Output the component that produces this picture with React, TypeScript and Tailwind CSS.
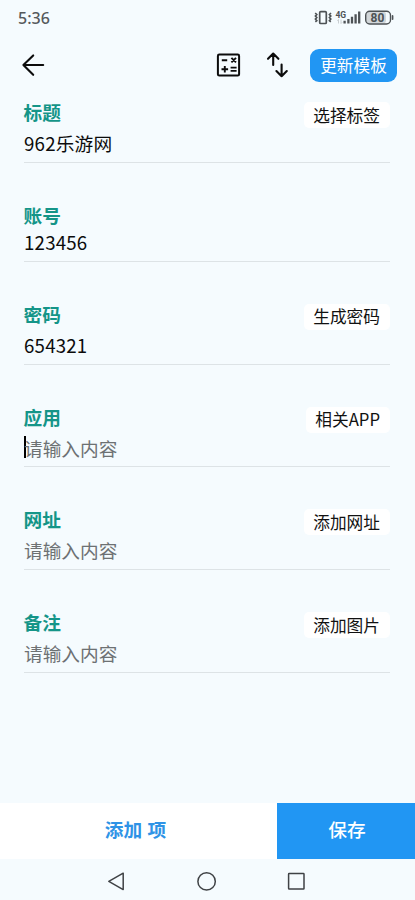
import React from "react";

type Field = {
  label: string;
  value?: string;
  action?: string;
  focused?: boolean;
};

const fields: Field[] = [
  { label: "标题", value: "962乐游网", action: "选择标签" },
  { label: "账号", value: "123456" },
  { label: "密码", value: "654321", action: "生成密码" },
  { label: "应用", action: "相关APP", focused: true },
  { label: "网址", action: "添加网址" },
  { label: "备注", action: "添加图片" },
];

const StatusBar = () => (
  <div className="flex h-[35px] items-center justify-between pl-[18px] pr-[21px] text-[#55595c]">
    <span className="font-['Noto_Sans',sans-serif] text-[16px] leading-[34px] font-medium">5:36</span>
    <svg width="80" height="20" viewBox="314 7.5 80 20" fill="none" stroke="#4d5255">
      {/* vibrate */}
      <rect x="319.7" y="11.2" width="6.6" height="11.8" rx="1" strokeWidth="1.7" />
      <path d="M315.2 12.5l1.6 1.6-1.4 1.5 1.4 1.5-1.4 1.5 1.4 1.5-1.4 1.2M331 12.5l-1.6 1.6 1.4 1.5-1.4 1.5 1.4 1.5-1.4 1.5 1.4 1.2" strokeWidth="1.6" />
      {/* signal */}
      <text x="335.6" y="17.4" fill="#4d5255" stroke="none" fontFamily="Roboto, sans-serif" fontSize="8.5" fontWeight="700" textLength="10.4">4G</text>
      <path d="M338.5 23v-4m-1.2 1.2l1.2-1.2M341 19v4m0 0l1.2-1.2" stroke="#c5cacd" strokeWidth="0.9" />
      <path d="M344.6 20.3v2.7M348.4 18.5v4.5M352 16.2v6.8M355.6 13.8v9.2M359.2 11v12" strokeWidth="2.3" />
      {/* battery */}
      <rect x="366" y="11" width="20" height="12" rx="3" fill="#d1d6d9" stroke="none" />
      <rect x="365.7" y="10.7" width="24.8" height="12.8" rx="4" strokeWidth="1.4" />
      <path d="M392.6 15.4v3.4" strokeWidth="1.6" strokeLinecap="round" />
      <text x="370.5" y="21.4" fill="#4d5255" stroke="none" fontFamily="Roboto, sans-serif" fontSize="12" fontWeight="700" textLength="13.8">80</text>
    </svg>
  </div>
);

const Toolbar = () => (
  <div className="flex h-[60px] items-center pl-[21px] pr-[18px]">
    <button type="button" title="返回">
      <svg width="24" height="24" viewBox="0 0 24 24" fill="none" stroke="#0c0c0c" strokeWidth="2.1" strokeLinecap="round" strokeLinejoin="round">
        <path d="M22.2 12H2.4M12.2 2.4L2.4 12l9.8 9.8" />
      </svg>
    </button>
    <button type="button" title="计算" className="ml-auto">
      <svg width="26" height="26" viewBox="0 0 26 26" fill="none" stroke="#0c0c0c" strokeWidth="1.9">
        <rect x="2.9" y="2.6" width="21.2" height="21" rx="1.4" strokeWidth="2" />
        <path d="M6.8 8.2h5.4M6.5 17.3h6.6M9.8 14v6.6M15.6 15.6h6M15.6 18.9h6M16.4 5.8l4.6 4.6M21 5.8l-4.6 4.6" />
      </svg>
    </button>
    <button type="button" title="排序" className="ml-[24px]">
      <svg width="26" height="26" viewBox="0 0 26 26" fill="none" stroke="#0c0c0c" strokeWidth="2.1" strokeLinecap="round" strokeLinejoin="round">
        <path d="M8.2 13V1.6M3 6.8l5.2-5.2 5.2 5.2M16.6 12.6v11.6M11.4 19l5.2 5.2 5.2-5.2" />
      </svg>
    </button>
    <button type="button" className="ml-[19px] h-[33px] w-[87px] rounded-[9px] bg-[#2196f3] text-[16.7px] leading-[31px] text-white">
      更新模板
    </button>
  </div>
);

const FieldRow = ({ label, value, action, focused }: Field) => (
  <div className={`flex flex-col border-b-[1.5px] border-[#dde3e6] ${action ? "h-[61.75px]" : "h-[58px]"}`}>
    <div className={`flex items-start justify-between ${action ? "h-[28px]" : "h-[24px]"}`}>
      <span className="-ml-[0.5px] text-[18.7px] leading-[21px] font-bold text-[#149588]">{label}</span>
      {action && (
        <button type="button" className="mt-px h-[26px] rounded-[5px] bg-white pr-[10px] pl-[9px] text-[16.7px] leading-[25px] text-[#111]">
          {action}
        </button>
      )}
    </div>
    <div className="flex h-[27px] items-center">
      {focused && <span className="-mr-[2px] h-[22px] w-[2px] bg-black" />}
      {value ? (
        <span className="text-[18.7px] leading-[27px] tracking-[0.2px] text-[#0c0c0c]">{value}</span>
      ) : (
        <span className="text-[18.7px] leading-[27px] text-[#6d7173]">请输入内容</span>
      )}
    </div>
  </div>
);

const App = () => {
  return (
    <div className="flex h-[900px] w-[415px] flex-col overflow-hidden bg-[#f5fbfe] font-['Noto_Sans_CJK_SC',sans-serif]">
      <StatusBar />
      <Toolbar />

      {/* FORM */}
      <div className="flex flex-1 flex-col gap-[41px] pr-[25px] pl-[24px] pt-[6px]">
        {fields.map((field) => (
          <FieldRow key={field.label} {...field} />
        ))}
      </div>

      {/* BOTTOM ACTIONS */}
      <div className="flex h-[56px] text-[18.7px]">
        <button type="button" className="w-[277px] bg-white pr-[6px] pb-[3px] font-bold text-[#2f93e6]">
          添加 <span className="ml-px">项</span>
        </button>
        <button type="button" className="flex-1 bg-[#2196f3] pl-[2px] pb-[3px] font-medium text-white">
          保存
        </button>
      </div>

      {/* SYSTEM NAVIGATION */}
      <div className="flex h-[41px] items-start justify-center">
        <svg width="415" height="41" viewBox="0 0 415 41" fill="none" stroke="#3f4245" strokeWidth="1.5" strokeLinejoin="round">
          <path d="M123.2 14.2v16.4L108.8 22.4z" />
          <circle cx="206.6" cy="22.4" r="8.7" />
          <rect x="288.6" y="14.6" width="15.4" height="15.4" rx="0.6" />
        </svg>
      </div>
    </div>
  );
};

export default App;
